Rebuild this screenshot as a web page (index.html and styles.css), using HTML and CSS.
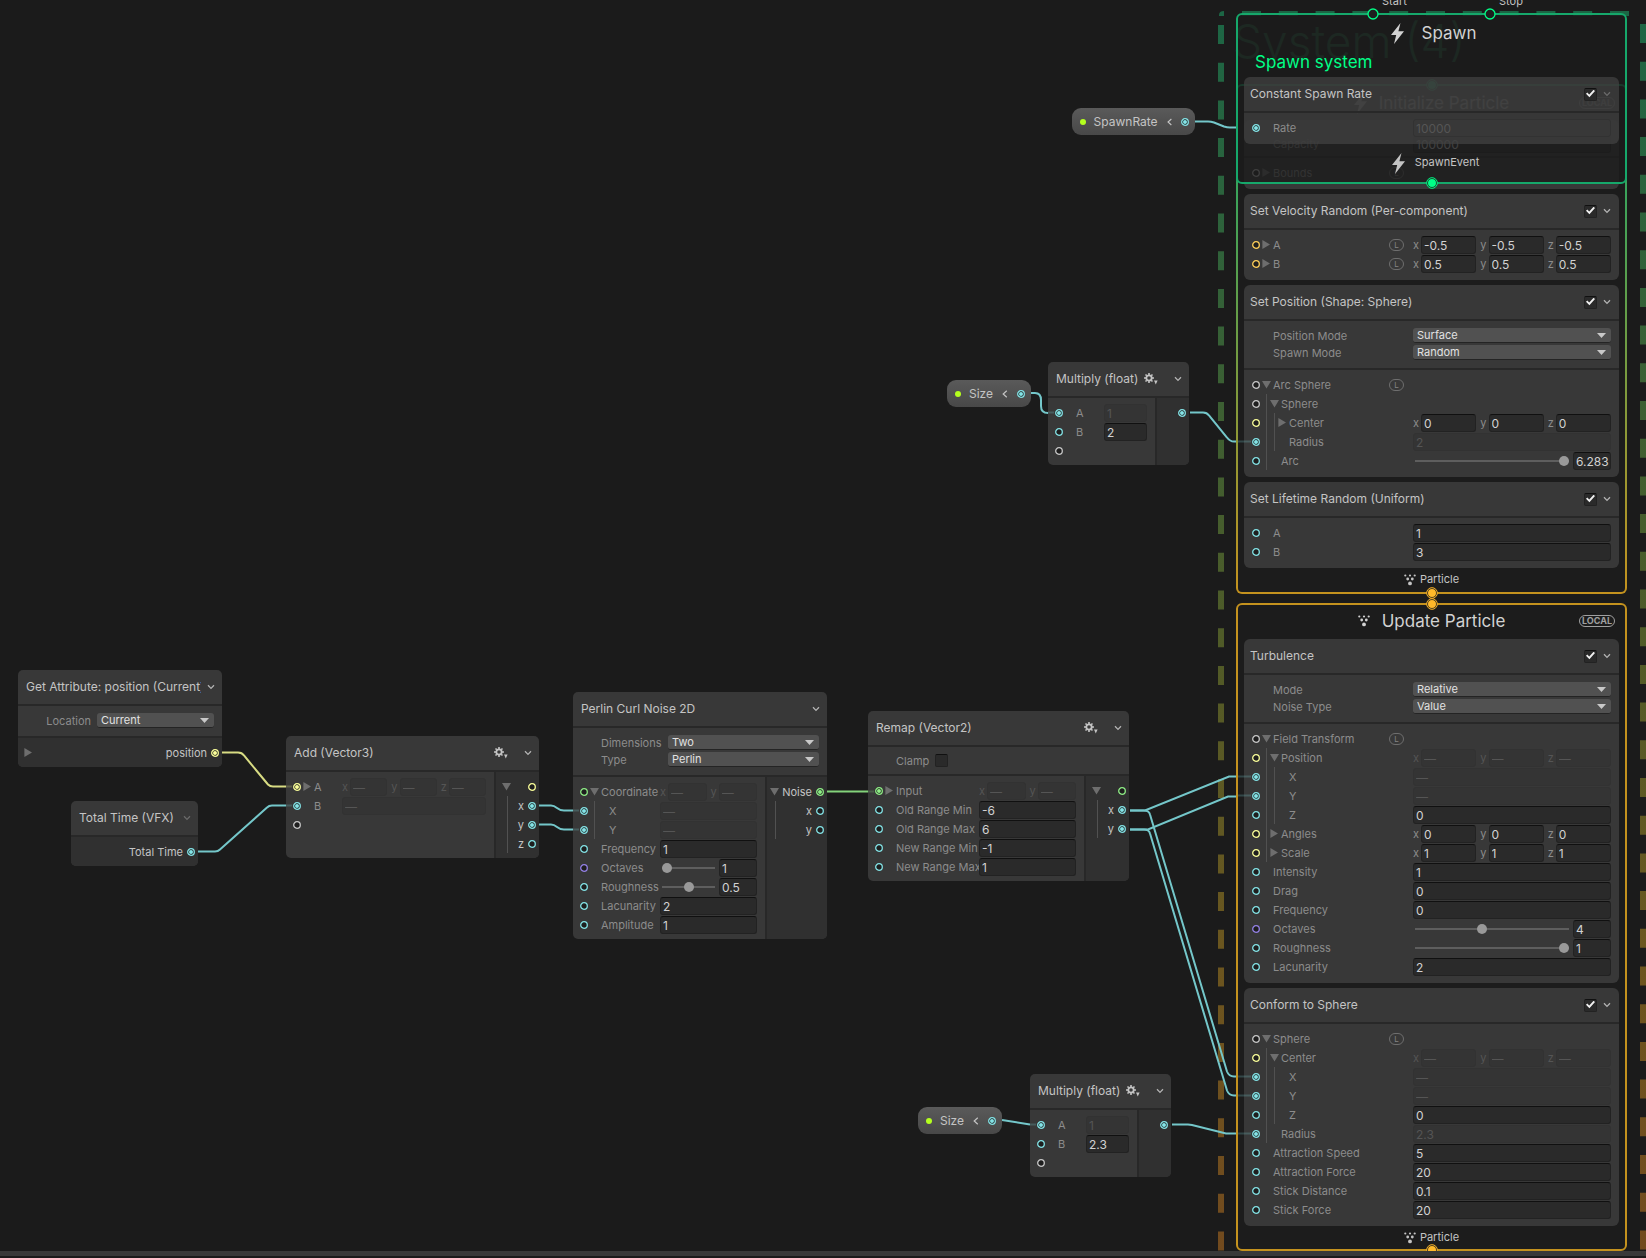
FILE: index.html
```html
<!DOCTYPE html>
<html lang="en">
<head>
<meta charset="utf-8">
<title>VFX Graph</title>
<link rel="stylesheet" href="styles.css">
</head>
<body>
<svg class="defs" aria-hidden="true">
  <symbol id="port" viewBox="0 0 8 8"><circle cx="4" cy="4" r="3.3" fill="#1e1e1e" stroke="currentColor" stroke-width="1.3"/></symbol>
  <symbol id="port-on" viewBox="0 0 8 8"><circle cx="4" cy="4" r="3.3" fill="#1e1e1e" stroke="currentColor" stroke-width="1.3"/><circle cx="4" cy="4" r="2" fill="currentColor"/></symbol>
  <symbol id="anchor" viewBox="0 0 12 12"><circle cx="6" cy="6" r="5" fill="#1e1e1e" stroke="currentColor" stroke-width="1.3"/></symbol>
  <symbol id="anchor-on" viewBox="0 0 12 12"><circle cx="6" cy="6" r="5.3" fill="#1e1e1e" stroke="currentColor" stroke-width="1"/><circle cx="6" cy="6" r="4" fill="currentColor"/></symbol>
  <symbol id="chevron" viewBox="0 0 8 8"><path d="M1 2.3 4 5.4 7 2.3" fill="none" stroke="currentColor" stroke-width="1.3"/></symbol>
  <symbol id="back" viewBox="0 0 8 8"><path d="M5.8.8 2.2 4l3.6 3.2" fill="none" stroke="currentColor" stroke-width="1.2"/></symbol>
  <symbol id="bolt" viewBox="0 0 13 21"><path d="M9.5 0 0 12h5.2L3 21 13 8.2H7.4Z" fill="currentColor"/></symbol>
  <symbol id="particles" viewBox="0 0 12 12"><g fill="currentColor"><circle cx="1.3" cy="1.5" r="1.1"/><circle cx="6" cy="1.5" r="1.1"/><circle cx="10.7" cy="1.5" r="1.1"/><circle cx="3.7" cy="5" r="1.4"/><circle cx="8.3" cy="5" r="1.4"/><circle cx="6" cy="9.4" r="1.9"/></g></symbol>
  <symbol id="gear" viewBox="0 0 14 12"><circle cx="5" cy="5" r="2.7" fill="none" stroke="currentColor" stroke-width="1.8"/><path d="M5 0v2M5 8v2M0 5h2M8 5h2M1.5 1.5l1.3 1.3M7.2 7.2l1.3 1.3M8.5 1.5 7.2 2.8M2.8 7.2 1.5 8.5" stroke="currentColor" stroke-width="1.6"/><path d="M10 7.5h3.6L11.8 11.5Z" fill="currentColor"/></symbol>
</svg>

<main class="canvas">
  <svg class="layer" aria-hidden="true">
    <defs>
      <linearGradient id="frame" gradientUnits="userSpaceOnUse" x1="0" y1="11" x2="0" y2="1258"><stop offset="0" stop-color="#1c6645"/><stop offset=".5" stop-color="#4f5b28"/><stop offset=".75" stop-color="#6b561f"/><stop offset="1" stop-color="#724a1e"/></linearGradient>
    </defs>
    <g fill="none" stroke="url(#frame)">
      <path d="M1219 16v-1q0-4 5-4v5Z" fill="#1c6645" stroke="none"/>
      <path d="M1221 25V1258" stroke-width="6" stroke-dasharray="19 18.7"/>
      <path d="M1643 24V1258" stroke-width="6" stroke-dasharray="19 18.7"/>
    </g>
    <path d="M1242 13.5H1630" fill="none" stroke="#1c6645" stroke-width="5" stroke-dasharray="19 17.8"/>
  </svg>
  <p class="system-title">System (4)</p>

  <svg class="layer edges" aria-hidden="true">
    <g class="e-float">
      <path d="M1194 121.5h14q3 0 6 1l10 4q3 1 6 1h7"/>
      <path d="M1031 393h4q6 0 6 7v6q0 7 7 7h2"/>
      <path d="M1190 412.500h13q4 0 6 3l18 22q3 4 7 4h3"/>
      <path d="M1002 1120 1030 1124.500"/>
      <path d="M1172 1124.500h16l4 .5 34 8.500h11"/>
      <path d="M1130 810.500h15l84-34h8"/>
      <path d="M1130 829.500h18l80-33h9"/>
      <path d="M1130 810.500h14q5 0 6 4l77 257q2 5 7 5h3"/>
      <path d="M1130 829.500h14q5 0 6 4l77 257q2 5 7 5h3"/>
      <path d="M198 851.500h17q3 0 5-2l47-42q2-2 5-2h15"/>
      <path d="M539 805.500h12q3 0 6 2.500t7 2.500h10"/>
      <path d="M539 824.500h12q3 0 6 2.500t7 2.500h10"/>
    </g>
    <path class="e-vec3" d="M222 752.500h16q4 0 6 3l24 29q2 2 5 2h14"/>
    <path class="e-vec2" d="M827 791.500h42"/>
  </svg>

  <article class="pill pill-rate"><i class="dot"></i><span>SpawnRate</span><svg class="ic back"><use href="#back"/></svg><svg class="port float"><use href="#port-on"/></svg></article>
  <article class="pill pill-size-a"><i class="dot"></i><span>Size</span><svg class="ic back"><use href="#back"/></svg><svg class="port float"><use href="#port-on"/></svg></article>
  <article class="pill pill-size-b"><i class="dot"></i><span>Size</span><svg class="ic back"><use href="#back"/></svg><svg class="port float"><use href="#port-on"/></svg></article>

  <article class="node node-get">
    <header><h3>Get Attribute: position (Current)</h3><button class="fold" aria-label="Collapse"><svg class="ic"><use href="#chevron"/></svg></button></header>
    <div class="settings"><label class="opt"><span>Location</span><b class="drop"><select><option>Current</option></select></b></label></div>
    <div class="outs">
      <div class="row"><button class="toggle" aria-label="Expand position"></button><span class="name">position</span><svg class="port vec3"><use href="#port-on"/></svg></div>
    </div>
  </article>

  <article class="node node-time">
    <header><h3>Total Time (VFX)</h3><button class="fold dim" aria-label="Collapse" disabled><svg class="ic"><use href="#chevron"/></svg></button></header>
    <div class="outs"><div class="row"><span class="name">Total Time</span><svg class="port float"><use href="#port-on"/></svg></div></div>
  </article>

  <article class="node node-add">
    <header><h3>Add (Vector3)</h3><button class="gear" aria-label="Settings"><svg><use href="#gear"/></svg></button><button class="fold" aria-label="Collapse"><svg class="ic"><use href="#chevron"/></svg></button></header>
    <div class="io">
      <div class="ins">
        <div class="row"><svg class="port vec3"><use href="#port-on"/></svg><button class="toggle" aria-label="Expand A"></button><span class="name">A</span><div class="vec off"><label>x<input value="—" disabled></label><label>y<input value="—" disabled></label><label>z<input value="—" disabled></label></div></div>
        <label class="row"><svg class="port float"><use href="#port-on"/></svg><i class="pad"></i><span class="name">B</span><input class="val" value="—" disabled></label>
        <div class="row"><svg class="port"><use href="#port"/></svg></div>
      </div>
      <div class="outs">
        <div class="row"><button class="toggle open" aria-label="Collapse output"></button><span class="name"></span><svg class="port vec3"><use href="#port"/></svg></div>
        <div class="row"><i class="rail"></i><span class="name">x</span><svg class="port float"><use href="#port-on"/></svg></div>
        <div class="row"><i class="rail"></i><span class="name">y</span><svg class="port float"><use href="#port-on"/></svg></div>
        <div class="row"><i class="rail"></i><span class="name">z</span><svg class="port float"><use href="#port"/></svg></div>
      </div>
    </div>
  </article>

  <article class="node node-noise">
    <header><h3>Perlin Curl Noise 2D</h3><button class="fold" aria-label="Collapse"><svg class="ic"><use href="#chevron"/></svg></button></header>
    <div class="settings">
      <label class="opt"><span>Dimensions</span><b class="drop"><select><option>Two</option></select></b></label>
      <label class="opt"><span>Type</span><b class="drop"><select><option>Perlin</option></select></b></label>
    </div>
    <div class="io">
      <div class="ins">
        <div class="row"><svg class="port vec2"><use href="#port"/></svg><button class="toggle open" aria-label="Collapse Coordinate"></button><span class="name">Coordinate</span><div class="vec off"><label>x<input value="—" disabled></label><label>y<input value="—" disabled></label></div></div>
        <label class="row"><svg class="port float"><use href="#port-on"/></svg><i class="guide"></i><i class="pad"></i><span class="name">X</span><input class="val" value="—" disabled></label>
        <label class="row"><svg class="port float"><use href="#port-on"/></svg><i class="guide"></i><i class="pad"></i><span class="name">Y</span><input class="val" value="—" disabled></label>
        <label class="row"><svg class="port float"><use href="#port"/></svg><i class="pad"></i><span class="name">Frequency</span><input class="val" value="1"></label>
        <div class="row"><svg class="port int"><use href="#port"/></svg><i class="pad"></i><label class="name" for="n-oct">Octaves</label><span class="slide"><input type="range" min="1" max="8" value="1" aria-label="Octaves slider"><input id="n-oct" value="1"></span></div>
        <div class="row"><svg class="port float"><use href="#port"/></svg><i class="pad"></i><label class="name" for="n-rough">Roughness</label><span class="slide"><input type="range" min="0" max="1" step="0.1" value="0.5" aria-label="Roughness slider"><input id="n-rough" value="0.5"></span></div>
        <label class="row"><svg class="port float"><use href="#port"/></svg><i class="pad"></i><span class="name">Lacunarity</span><input class="val" value="2"></label>
        <label class="row"><svg class="port float"><use href="#port"/></svg><i class="pad"></i><span class="name">Amplitude</span><input class="val" value="1"></label>
      </div>
      <div class="outs">
        <div class="row"><button class="toggle open" aria-label="Collapse Noise"></button><span class="name">Noise</span><svg class="port vec2"><use href="#port-on"/></svg></div>
        <div class="row"><i class="rail"></i><span class="name">x</span><svg class="port float"><use href="#port"/></svg></div>
        <div class="row"><i class="rail"></i><span class="name">y</span><svg class="port float"><use href="#port"/></svg></div>
      </div>
    </div>
  </article>

  <article class="node node-remap">
    <header><h3>Remap (Vector2)</h3><button class="gear" aria-label="Settings"><svg><use href="#gear"/></svg></button><button class="fold" aria-label="Collapse"><svg class="ic"><use href="#chevron"/></svg></button></header>
    <div class="settings tight"><label class="opt"><span>Clamp</span><input type="checkbox"></label></div>
    <div class="io">
      <div class="ins">
        <div class="row"><svg class="port vec2"><use href="#port-on"/></svg><button class="toggle" aria-label="Expand Input"></button><span class="name">Input</span><div class="vec off"><label>x<input value="—" disabled></label><label>y<input value="—" disabled></label></div></div>
        <label class="row"><svg class="port float"><use href="#port"/></svg><i class="pad"></i><span class="name">Old Range Min</span><input class="val" value="-6"></label>
        <label class="row"><svg class="port float"><use href="#port"/></svg><i class="pad"></i><span class="name">Old Range Max</span><input class="val" value="6"></label>
        <label class="row"><svg class="port float"><use href="#port"/></svg><i class="pad"></i><span class="name">New Range Min</span><input class="val" value="-1"></label>
        <label class="row"><svg class="port float"><use href="#port"/></svg><i class="pad"></i><span class="name">New Range Max</span><input class="val" value="1"></label>
      </div>
      <div class="outs">
        <div class="row"><button class="toggle open" aria-label="Collapse output"></button><span class="name"></span><svg class="port vec2"><use href="#port"/></svg></div>
        <div class="row"><i class="rail"></i><span class="name">x</span><svg class="port float"><use href="#port-on"/></svg></div>
        <div class="row"><i class="rail"></i><span class="name">y</span><svg class="port float"><use href="#port-on"/></svg></div>
      </div>
    </div>
  </article>

  <article class="node node-mul node-mul-a">
    <header><h3>Multiply (float)</h3><button class="gear" aria-label="Settings"><svg><use href="#gear"/></svg></button><button class="fold" aria-label="Collapse"><svg class="ic"><use href="#chevron"/></svg></button></header>
    <div class="io">
      <div class="ins">
        <label class="row"><svg class="port float"><use href="#port-on"/></svg><i class="pad"></i><span class="name">A</span><input class="val" value="1" disabled></label>
        <label class="row"><svg class="port float"><use href="#port"/></svg><i class="pad"></i><span class="name">B</span><input class="val" value="2"></label>
        <div class="row"><svg class="port"><use href="#port"/></svg></div>
      </div>
      <div class="outs"><div class="row"><span class="name"></span><svg class="port float"><use href="#port-on"/></svg></div></div>
    </div>
  </article>

  <article class="node node-mul node-mul-b">
    <header><h3>Multiply (float)</h3><button class="gear" aria-label="Settings"><svg><use href="#gear"/></svg></button><button class="fold" aria-label="Collapse"><svg class="ic"><use href="#chevron"/></svg></button></header>
    <div class="io">
      <div class="ins">
        <label class="row"><svg class="port float"><use href="#port-on"/></svg><i class="pad"></i><span class="name">A</span><input class="val" value="1" disabled></label>
        <label class="row"><svg class="port float"><use href="#port"/></svg><i class="pad"></i><span class="name">B</span><input class="val" value="2.3"></label>
        <div class="row"><svg class="port"><use href="#port"/></svg></div>
      </div>
      <div class="outs"><div class="row"><span class="name"></span><svg class="port float"><use href="#port-on"/></svg></div></div>
    </div>
  </article>

  <section class="context ctx-init">
    <svg class="anchor top spawn"><use href="#anchor-on"/></svg>
    <header class="ctx-head"><svg class="bolt"><use href="#bolt"/></svg><h2>Initialize Particle</h2><em class="local">LOCAL</em></header>
    <div class="blocks">
      <section class="block">
        <div class="settings capacity"><label class="opt"><span>Capacity</span><input class="val" value="100000"></label></div>
        <div class="ins"><div class="row"><svg class="port"><use href="#port"/></svg><button class="toggle" aria-label="Expand Bounds"></button><span class="name">Bounds</span><em class="badge">L</em><i class="val"></i></div></div>
      </section>
      <section class="block">
        <header><h3>Set Velocity Random (Per-component)</h3><input type="checkbox" checked aria-label="Enable block"><button class="fold" aria-label="Collapse"><svg class="ic"><use href="#chevron"/></svg></button></header>
        <div class="ins">
          <div class="row"><svg class="port dir"><use href="#port"/></svg><button class="toggle" aria-label="Expand A"></button><span class="name">A</span><em class="badge">L</em><div class="vec"><label>x<input value="-0.5"></label><label>y<input value="-0.5"></label><label>z<input value="-0.5"></label></div></div>
          <div class="row"><svg class="port dir"><use href="#port"/></svg><button class="toggle" aria-label="Expand B"></button><span class="name">B</span><em class="badge">L</em><div class="vec"><label>x<input value="0.5"></label><label>y<input value="0.5"></label><label>z<input value="0.5"></label></div></div>
        </div>
      </section>
      <section class="block">
        <header><h3>Set Position (Shape: Sphere)</h3><input type="checkbox" checked aria-label="Enable block"><button class="fold" aria-label="Collapse"><svg class="ic"><use href="#chevron"/></svg></button></header>
        <div class="settings">
          <label class="opt"><span>Position Mode</span><b class="drop"><select><option>Surface</option></select></b></label>
          <label class="opt"><span>Spawn Mode</span><b class="drop"><select><option>Random</option></select></b></label>
        </div>
        <div class="ins">
          <div class="row"><svg class="port"><use href="#port"/></svg><button class="toggle open" aria-label="Collapse Arc Sphere"></button><span class="name">Arc Sphere</span><em class="badge">L</em><i class="val"></i></div>
          <div class="row"><svg class="port"><use href="#port"/></svg><i class="guide"></i><button class="toggle open" aria-label="Collapse Sphere"></button><span class="name">Sphere</span></div>
          <div class="row"><svg class="port vec3"><use href="#port"/></svg><i class="guide"></i><i class="guide"></i><button class="toggle" aria-label="Expand Center"></button><span class="name">Center</span><div class="vec"><label>x<input value="0"></label><label>y<input value="0"></label><label>z<input value="0"></label></div></div>
          <label class="row"><svg class="port float"><use href="#port-on"/></svg><i class="guide"></i><i class="guide"></i><i class="pad"></i><span class="name">Radius</span><input class="val" value="2" disabled></label>
          <div class="row"><svg class="port float"><use href="#port"/></svg><i class="guide"></i><i class="pad"></i><label class="name" for="p-arc">Arc</label><span class="slide"><input type="range" min="0" max="6.283" step="0.001" value="6.283" aria-label="Arc slider"><input id="p-arc" value="6.283"></span></div>
        </div>
      </section>
      <section class="block">
        <header><h3>Set Lifetime Random (Uniform)</h3><input type="checkbox" checked aria-label="Enable block"><button class="fold" aria-label="Collapse"><svg class="ic"><use href="#chevron"/></svg></button></header>
        <div class="ins">
          <label class="row"><svg class="port float"><use href="#port"/></svg><i class="pad"></i><span class="name">A</span><input class="val" value="1"></label>
          <label class="row"><svg class="port float"><use href="#port"/></svg><i class="pad"></i><span class="name">B</span><input class="val" value="3"></label>
        </div>
      </section>
    </div>
    <footer class="ctx-foot"><svg class="particles"><use href="#particles"/></svg><span>Particle</span></footer>
    <svg class="anchor bottom flow"><use href="#anchor-on"/></svg>
  </section>

  <section class="context ctx-spawn">
    <div class="event start"><span>Start</span><svg class="anchor"><use href="#anchor"/></svg></div>
    <div class="event stop"><span>Stop</span><svg class="anchor"><use href="#anchor"/></svg></div>
    <header class="ctx-head"><svg class="bolt"><use href="#bolt"/></svg><h2>Spawn</h2></header>
    <p class="sub">Spawn system</p>
    <div class="blocks">
      <section class="block">
        <header><h3>Constant Spawn Rate</h3><input type="checkbox" checked aria-label="Enable block"><button class="fold dim" aria-label="Collapse" disabled><svg class="ic"><use href="#chevron"/></svg></button></header>
        <div class="ins"><label class="row"><svg class="port float"><use href="#port-on"/></svg><i class="pad"></i><span class="name">Rate</span><input class="val" value="10000" disabled></label></div>
      </section>
    </div>
    <footer class="ctx-foot"><svg class="bolt"><use href="#bolt"/></svg><span>SpawnEvent</span></footer>
    <svg class="anchor bottom spawn"><use href="#anchor-on"/></svg>
  </section>

  <section class="context ctx-update">
    <svg class="anchor top flow"><use href="#anchor-on"/></svg>
    <header class="ctx-head"><svg class="particles"><use href="#particles"/></svg><h2>Update Particle</h2><em class="local">LOCAL</em></header>
    <div class="blocks">
      <section class="block">
        <header><h3>Turbulence</h3><input type="checkbox" checked aria-label="Enable block"><button class="fold" aria-label="Collapse"><svg class="ic"><use href="#chevron"/></svg></button></header>
        <div class="settings">
          <label class="opt"><span>Mode</span><b class="drop"><select><option>Relative</option></select></b></label>
          <label class="opt"><span>Noise Type</span><b class="drop"><select><option>Value</option></select></b></label>
        </div>
        <div class="ins">
          <div class="row"><svg class="port"><use href="#port"/></svg><button class="toggle open" aria-label="Collapse Field Transform"></button><span class="name">Field Transform</span><em class="badge">L</em><i class="val"></i></div>
          <div class="row"><svg class="port vec3"><use href="#port"/></svg><i class="guide"></i><button class="toggle open" aria-label="Collapse Position"></button><span class="name">Position</span><div class="vec off"><label>x<input value="—" disabled></label><label>y<input value="—" disabled></label><label>z<input value="—" disabled></label></div></div>
          <label class="row"><svg class="port float"><use href="#port-on"/></svg><i class="guide"></i><i class="guide"></i><i class="pad"></i><span class="name">X</span><input class="val" value="—" disabled></label>
          <label class="row"><svg class="port float"><use href="#port-on"/></svg><i class="guide"></i><i class="guide"></i><i class="pad"></i><span class="name">Y</span><input class="val" value="—" disabled></label>
          <label class="row"><svg class="port float"><use href="#port"/></svg><i class="guide"></i><i class="guide"></i><i class="pad"></i><span class="name">Z</span><input class="val" value="0"></label>
          <div class="row"><svg class="port vec3"><use href="#port"/></svg><i class="guide"></i><button class="toggle" aria-label="Expand Angles"></button><span class="name">Angles</span><div class="vec"><label>x<input value="0"></label><label>y<input value="0"></label><label>z<input value="0"></label></div></div>
          <div class="row"><svg class="port vec3"><use href="#port"/></svg><i class="guide"></i><button class="toggle" aria-label="Expand Scale"></button><span class="name">Scale</span><div class="vec"><label>x<input value="1"></label><label>y<input value="1"></label><label>z<input value="1"></label></div></div>
          <label class="row"><svg class="port float"><use href="#port"/></svg><i class="pad"></i><span class="name">Intensity</span><input class="val" value="1"></label>
          <label class="row"><svg class="port float"><use href="#port"/></svg><i class="pad"></i><span class="name">Drag</span><input class="val" value="0"></label>
          <label class="row"><svg class="port float"><use href="#port"/></svg><i class="pad"></i><span class="name">Frequency</span><input class="val" value="0"></label>
          <div class="row"><svg class="port int"><use href="#port"/></svg><i class="pad"></i><label class="name" for="t-oct">Octaves</label><span class="slide"><input type="range" min="1" max="8" value="4" aria-label="Octaves slider"><input id="t-oct" value="4"></span></div>
          <div class="row"><svg class="port float"><use href="#port"/></svg><i class="pad"></i><label class="name" for="t-rough">Roughness</label><span class="slide"><input type="range" min="0" max="1" step="0.1" value="1" aria-label="Roughness slider"><input id="t-rough" value="1"></span></div>
          <label class="row"><svg class="port float"><use href="#port"/></svg><i class="pad"></i><span class="name">Lacunarity</span><input class="val" value="2"></label>
        </div>
      </section>
      <section class="block">
        <header><h3>Conform to Sphere</h3><input type="checkbox" checked aria-label="Enable block"><button class="fold" aria-label="Collapse"><svg class="ic"><use href="#chevron"/></svg></button></header>
        <div class="ins">
          <div class="row"><svg class="port"><use href="#port"/></svg><button class="toggle open" aria-label="Collapse Sphere"></button><span class="name">Sphere</span><em class="badge">L</em><i class="val"></i></div>
          <div class="row"><svg class="port vec3"><use href="#port"/></svg><i class="guide"></i><button class="toggle open" aria-label="Collapse Center"></button><span class="name">Center</span><div class="vec off"><label>x<input value="—" disabled></label><label>y<input value="—" disabled></label><label>z<input value="—" disabled></label></div></div>
          <label class="row"><svg class="port float"><use href="#port-on"/></svg><i class="guide"></i><i class="guide"></i><i class="pad"></i><span class="name">X</span><input class="val" value="—" disabled></label>
          <label class="row"><svg class="port float"><use href="#port-on"/></svg><i class="guide"></i><i class="guide"></i><i class="pad"></i><span class="name">Y</span><input class="val" value="—" disabled></label>
          <label class="row"><svg class="port float"><use href="#port"/></svg><i class="guide"></i><i class="guide"></i><i class="pad"></i><span class="name">Z</span><input class="val" value="0"></label>
          <label class="row"><svg class="port float"><use href="#port-on"/></svg><i class="guide"></i><i class="pad"></i><span class="name">Radius</span><input class="val" value="2.3" disabled></label>
          <label class="row"><svg class="port float"><use href="#port"/></svg><i class="pad"></i><span class="name">Attraction Speed</span><input class="val" value="5"></label>
          <label class="row"><svg class="port float"><use href="#port"/></svg><i class="pad"></i><span class="name">Attraction Force</span><input class="val" value="20"></label>
          <label class="row"><svg class="port float"><use href="#port"/></svg><i class="pad"></i><span class="name">Stick Distance</span><input class="val" value="0.1"></label>
          <label class="row"><svg class="port float"><use href="#port"/></svg><i class="pad"></i><span class="name">Stick Force</span><input class="val" value="20"></label>
        </div>
      </section>
    </div>
    <footer class="ctx-foot"><svg class="particles"><use href="#particles"/></svg><span>Particle</span></footer>
    <svg class="anchor bottom flow"><use href="#anchor-on"/></svg>
  </section>

  <svg class="layer edges tails" aria-hidden="true">
    <g class="e-float">
      <path d="M1238 441.500h13M1238 776.500h13M1238 795.500h13M1238 1076.500h13M1238 1095.500h13M1238 1133.500h13"/>
      <path d="M286 805.500h6M573 810.500h6M573 829.500h6M1048 412.500h6M1030 1124.500h6"/>
    </g>
    <path class="e-vec3" d="M286 786.500h6"/>
    <path class="e-vec2" d="M868 791.500h6"/>
  </svg>
</main>
<footer class="splitter"></footer>
</body>
</html>
```
FILE: styles.css
```css
* { box-sizing: border-box; }

:root {
  --bg: #1b1b1b;
  --panel: #383838;
  --panel-dark: #303030;
  --line: #282828;
  --float: #84e4e7;
  --vec3: #fbff9a;
  --vec2: #8fee86;
  --spawn: #00ff87;
  --flow: #ffb92a;
}

body {
  margin: 0;
  height: 100vh;
  display: flex;
  flex-direction: column;
  overflow: hidden;
  background: var(--bg);
  color: #c4c4c4;
  font: 11px/16px Inter, "Liberation Sans", sans-serif;
}

h2, h3, p { margin: 0; font-weight: 400; }
em, i, b { font-style: normal; font-weight: 400; }
button { padding: 0; border: 0; background: none; color: inherit; }
input, select { font: inherit; min-width: 0; }
.defs { position: absolute; width: 0; height: 0; }

.canvas { position: relative; flex: 1; overflow: hidden; }
.splitter { height: 7px; background: #393939; border-bottom: 2px solid #1b1b1b; }
.layer { position: absolute; inset: 0; width: 100%; height: 100%; pointer-events: none; }

.system-title {
  position: absolute;
  left: 1233px;
  top: 14px;
  font-size: 46px;
  line-height: 54px;
  font-weight: 300;
  color: #23593f;
}

/* edges */
.edges { fill: none; stroke-width: 2; }
.e-float { stroke: #74c7ca; }
.e-vec3 { stroke: #d8dc83; }
.e-vec2 { stroke: #83d37b; }
.tails { opacity: .25; }

/* icons */
.port { flex: none; width: 8px; height: 8px; color: #c8c8c8; }
.port.float { color: var(--float); }
.port.vec3 { color: var(--vec3); }
.port.vec2 { color: var(--vec2); }
.port.int { color: #9481e6; }
.port.dir { color: #ffd05a; }
.ic { display: block; width: 8px; height: 8px; }
.bolt { width: 13px; height: 21px; }
.particles { width: 12px; height: 12px; }
.anchor { width: 12px; height: 12px; color: var(--spawn); }
.anchor.flow { color: var(--flow); }
.anchor.top, .anchor.bottom { position: absolute; left: 50%; margin-left: -6px; z-index: 2; }
.anchor.top { top: -7px; }
.anchor.bottom { bottom: -7px; }

/* property pills */
.pill {
  position: absolute;
  display: flex;
  align-items: center;
  gap: 8px;
  height: 27px;
  padding: 0 6px 0 8px;
  border-radius: 9px;
  background: linear-gradient(#5a5a5a, #484848);
  font-size: 12px;
}
.pill span { flex: 1; }
.pill .dot { width: 6px; height: 6px; border-radius: 3px; background: #b4ff1e; }
.pill-rate { left: 1072px; top: 108px; width: 123px; }
.pill-size-a { left: 947px; top: 380px; width: 84px; }
.pill-size-b { left: 918px; top: 1107px; width: 84px; }

/* nodes and blocks */
.node {
  position: absolute;
  overflow: hidden;
  border-radius: 5px;
  background: var(--panel);
  --field: 97px;
}
.node-get { left: 18px; top: 670px; width: 204px; --pick: 117px; }
.node-time { left: 71px; top: 801px; width: 127px; }
.node-add { left: 286px; top: 736px; width: 253px; --field: 144px; --out: 45px; }
.node-noise { left: 573px; top: 692px; width: 254px; --out: 62px; --pick: 151px; }
.node-remap { left: 868px; top: 711px; width: 261px; --out: 45px; }
.node-mul { width: 141px; --field: 43px; --out: 34px; }
.node-mul-a { left: 1048px; top: 362px; }
.node-mul-b { left: 1030px; top: 1074px; }

.block {
  border-radius: 6px;
  background: var(--panel);
  --field: 198px;
  --pick: 198px;
}

.node > header, .block > header {
  display: flex;
  align-items: center;
  height: 34px;
  padding: 0 7px 0 8px;
  font-size: 12px;
}
.block > header { padding: 0 8px 0 6px; gap: 6px; }
h3 { flex: 1; overflow: hidden; white-space: nowrap; font-size: 12px; }
.fold { width: 8px; height: 8px; color: #b4b4b4; }
.fold.dim { color: #6a6a6a; }
.node .fold { margin-left: 6px; }
.gear, .gear svg { display: block; width: 14px; height: 12px; }
.gear { margin-right: 10px; }

.settings, .block > .ins, .io, .node > .outs { border-top: 2px solid var(--line); }
.settings { padding: 6px 8px 7px 28px; }
.settings.tight { padding-top: 5px; padding-bottom: 5px; }
.settings.capacity { border-top: 0; padding-top: 15px; padding-bottom: 4px; }
.opt { display: flex; align-items: center; height: 17px; color: #8c8c8c; }
.block .opt { padding-left: 1px; }
.opt > span { flex: 1; }
.tight .opt > span { flex: none; margin-right: 6px; }
.opt .drop { flex: none; width: var(--pick); }
.drop { position: relative; display: block; height: 15px; }
.drop::after {
  content: "";
  position: absolute;
  right: 5px;
  top: 5px;
  width: 9px;
  height: 5px;
  background: #c8c8c8;
  clip-path: polygon(0 0, 100% 0, 50% 100%);
}
.drop select {
  display: block;
  appearance: none;
  width: 100%;
  height: 15px;
  padding: 0 4px;
  border: 0;
  border-bottom: 1px solid #242424;
  border-radius: 3px;
  background: #515151;
  color: #e2e2e2;
  line-height: 14px;
}
.node-get .opt > span { text-align: right; margin-right: 6px; }

.io { display: flex; }
.ins { flex: 1; min-width: 0; padding: 5px 8px 7px; }
.node .ins { padding: 5px 8px 5px 7px; }
.outs { background: var(--panel-dark); padding: 5px 3px 5px 6px; }
.io > .outs { flex: none; width: var(--out); border-left: 2px solid var(--line); }
.node-noise .outs { padding-left: 3px; }
.outs .name { text-align: right; color: #c4c4c4; margin-right: 2px; }

.row { display: flex; align-items: center; gap: 2px; height: 19px; }
.name { flex: 1; min-width: 0; color: #8c8c8c; white-space: nowrap; }
.pad { flex: none; width: 9px; }
.guide { flex: none; width: 2px; height: 19px; margin-left: 4px; border-left: 1px solid #515151; }
.rail { flex: none; width: 6px; height: 19px; border-right: 1px solid #515151; margin-right: -6px; }

.toggle { flex: none; width: 9px; height: 9px; }
.toggle::before {
  content: "";
  display: block;
  width: 8px;
  height: 9px;
  background: #6e6e6e;
  clip-path: polygon(5% 0, 100% 50%, 5% 100%);
}
.toggle.open::before { width: 9px; height: 8px; clip-path: polygon(0 5%, 100% 5%, 50% 100%); }

/* fields */
.val, .vec, .slide { flex: none; width: var(--field); }
input:not([type]) {
  height: 18px;
  padding: 1px 0 0 2px;
  border: 1px solid #222;
  border-top-color: #101010;
  border-radius: 3px;
  background: #2a2a2a;
  color: #d2d2d2;
  font-size: 12px;
}
input:not([type]):disabled {
  background: #343434;
  border-color: #323232;
  color: #555;
}
.vec { display: flex; gap: 4px; }
.vec label { display: flex; flex: 1; align-items: center; gap: 2px; min-width: 0; color: #8c8c8c; }
.vec label input { flex: 1; width: 0; }
.vec.off label { color: #555; }
.slide { display: flex; align-items: center; gap: 4px; }
.slide input:not([type]) { width: 38px; }

input[type="range"] {
  appearance: none;
  flex: 1;
  width: 0;
  height: 10px;
  margin: 0 0 0 2px;
  background: linear-gradient(#5e5e5e, #5e5e5e) center / 100% 2px no-repeat;
}
input[type="range"]::-webkit-slider-thumb {
  appearance: none;
  width: 10px;
  height: 10px;
  border-radius: 5px;
  background: #999;
}

input[type="checkbox"] {
  appearance: none;
  flex: none;
  width: 13px;
  height: 13px;
  margin: 0;
  border: 1px solid #222;
  border-top-color: #101010;
  border-radius: 2px;
  background: #2a2a2a;
}
input[type="checkbox"]:checked::before {
  content: "";
  display: block;
  width: 9px;
  height: 8px;
  margin: 1px;
  background: #f0f0f0;
  clip-path: polygon(0 52%, 14% 36%, 36% 62%, 84% 4%, 100% 20%, 38% 96%);
}

.badge {
  width: 15px;
  height: 12px;
  margin-right: 7px;
  border: 1px solid #6e6e6e;
  border-radius: 6px;
  color: #848484;
  font-size: 8px;
  line-height: 10px;
  text-align: center;
}

/* contexts */
.context {
  position: absolute;
  isolation: isolate;
  left: 1236px;
  width: 391px;
  display: flex;
  flex-direction: column;
  padding: 0 6px;
  border: 2px solid #c4921e;
  border-radius: 6px;
  background: #1c1c1c;
}
.ctx-init {
  top: 84px;
  border-color: transparent;
  background: linear-gradient(#1c1c1c, #1c1c1c) padding-box, linear-gradient(#16a86b, #c4921e) border-box;
}
.ctx-update { top: 603px; }
.ctx-spawn { top: 13px; border-color: #16a86b; background: rgba(28, 28, 28, .8); }
.ctx-spawn .block { background: rgba(66, 66, 66, .75); }
.ctx-spawn input:not([type]):disabled { background: #383838; }

.ctx-head {
  position: relative;
  display: flex;
  align-items: center;
  justify-content: center;
  gap: 12px;
  height: 34px;
  color: #d2d2d2;
}
.ctx-update .ctx-head { padding-bottom: 2px; }
.ctx-spawn .ctx-head { gap: 18px; height: 36px; padding-left: 4px; }
h2 { font-size: 17px; line-height: 24px; }
.local {
  position: absolute;
  right: 4px;
  width: 36px;
  height: 12px;
  border: 1px solid #a0a0a0;
  border-radius: 6px;
  font-size: 9px;
  line-height: 10px;
  font-weight: 700;
  text-align: center;
  color: #a0a0a0;
}
.sub { height: 26px; padding-left: 11px; font-size: 17px; line-height: 22px; color: var(--spawn); }
.blocks { display: flex; flex-direction: column; gap: 5px; }
.ctx-foot { display: flex; align-items: center; justify-content: center; gap: 4px; height: 23px; }
.ctx-foot span { padding-bottom: 2px; }
.ctx-init .ctx-foot { height: 24px; }
.ctx-spawn .ctx-foot { height: 38px; gap: 10px; padding-left: 8px; }

.event { position: absolute; top: -21px; }
.event span { display: block; margin-left: 15px; line-height: 14px; }
.event .anchor { display: block; }
.event.start { left: 129px; }
.event.stop { left: 246px; }
```
